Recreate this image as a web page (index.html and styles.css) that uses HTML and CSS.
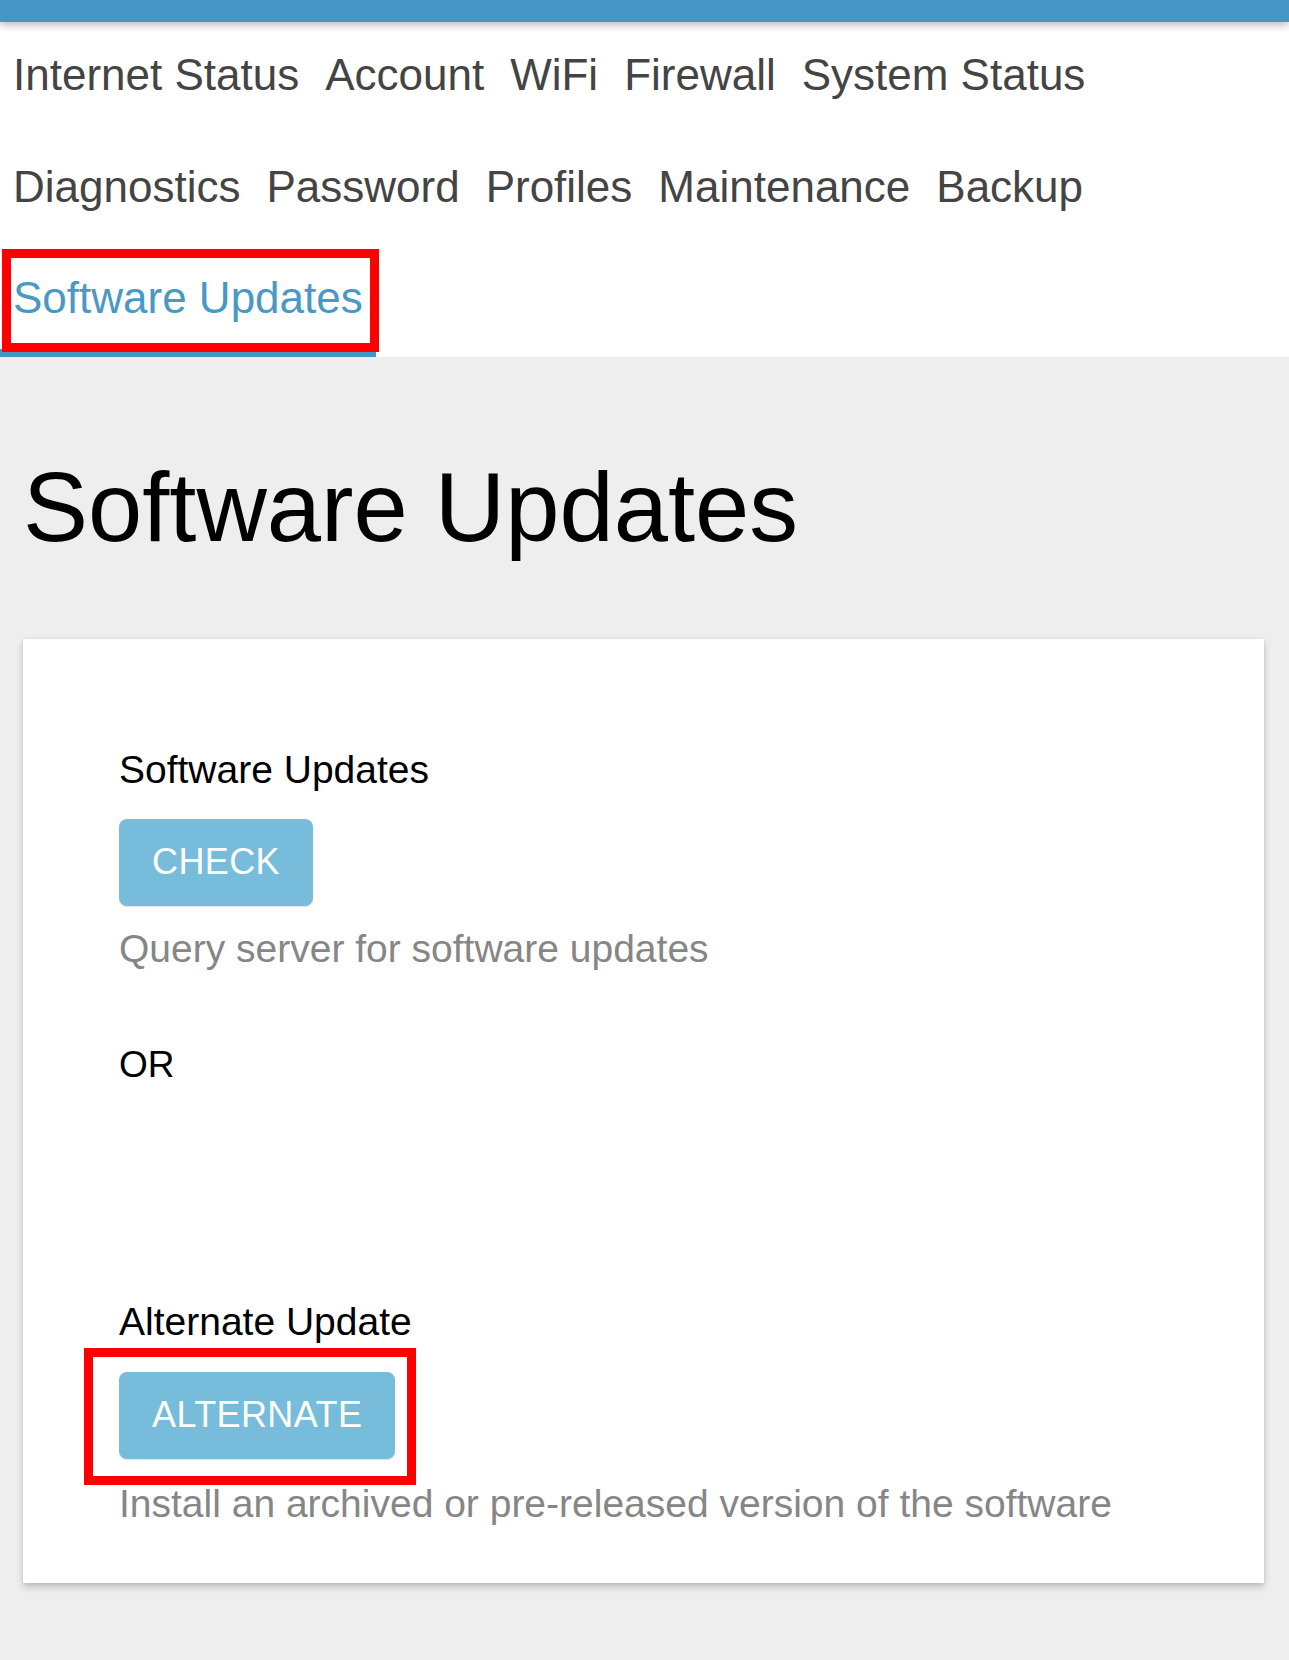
FILE: index.html
```html
<!DOCTYPE html>
<html lang="en">
<head>
<meta charset="utf-8">
<title>Software Updates</title>
<link rel="stylesheet" href="styles.css">
</head>
<body>
<div class="topbar"></div>
<nav class="tabs">
  <a class="tab" href="#">Internet Status</a>
  <a class="tab" href="#">Account</a>
  <a class="tab" href="#">WiFi</a>
  <a class="tab" href="#">Firewall</a>
  <a class="tab" href="#">System Status</a>
  <a class="tab" href="#">Diagnostics</a>
  <a class="tab" href="#">Password</a>
  <a class="tab" href="#">Profiles</a>
  <a class="tab" href="#">Maintenance</a>
  <a class="tab" href="#">Backup</a>
  <a class="tab active" href="#">Software Updates<span class="mark mark-tab"></span></a>
</nav>
<main class="page">
  <h1 class="title">Software Updates</h1>
  <section class="card">
    <div class="label">Software Updates</div>
    <div class="btn-wrap first"><button class="btn" type="button">CHECK</button></div>
    <div class="hint">Query server for software updates</div>
    <div class="or">OR</div>
    <div class="label alt">Alternate Update</div>
    <div class="btn-wrap second"><button class="btn" type="button">ALTERNATE</button><span class="mark mark-btn"></span></div>
    <div class="hint">Install an archived or pre-released version of the software</div>
  </section>
</main>
</body>
</html>
```

FILE: styles.css
```css
html, body {
  margin: 0;
  padding: 0;
}

body {
  background: #eeeeee;
  font-family: "Liberation Sans", Arial, "Helvetica Neue", Helvetica, sans-serif;
  color: #000;
}

.topbar {
  position: relative;
  z-index: 2;
  height: 22px;
  background: #4596c6;
  box-shadow: 0 3px 8px rgba(0, 0, 0, 0.28);
}

.tabs {
  display: flex;
  flex-wrap: wrap;
  background: #ffffff;
}

.tab {
  position: relative;
  display: block;
  padding: 27px 13px 32.67px;
  font-size: 44px;
  line-height: 52px;
  color: #444444;
  text-decoration: none;
  white-space: nowrap;
}

.tab.active {
  color: #4a98c4;
  border-bottom: 8px solid #4596c6;
  padding-bottom: 24.67px;
}

.mark {
  position: absolute;
  box-sizing: border-box;
  border: 9px solid #ff0000;
  pointer-events: none;
}

.mark-tab {
  top: 4px;
  left: 2px;
  right: -3px;
  bottom: -3px;
}

.page {
  padding: 95.7px 25px 77px 23px;
}

.title {
  margin: 0;
  font-size: 97.5px;
  line-height: 110px;
  font-weight: normal;
  color: #000;
}

.card {
  margin-top: 76.3px;
  background: #ffffff;
  padding: 109px 40px 56px 96px;
  box-shadow: 0 4px 7px rgba(0, 0, 0, 0.2), 0 0 3px rgba(0, 0, 0, 0.08);
}

.label {
  font-size: 39px;
  line-height: 44px;
  color: #000;
}

.label.alt {
  margin-top: 212.8px;
}

.btn-wrap {
  position: relative;
  display: flex;
  width: fit-content;
}

.btn-wrap.first {
  margin-top: 27px;
}

.btn-wrap.second {
  margin-top: 28px;
}

.btn {
  height: 87px;
  padding: 0 33px;
  border: none;
  border-radius: 8px;
  background: #77bcdb;
  color: #ffffff;
  font-family: "Liberation Sans", Arial, sans-serif;
  font-size: 36px;
  letter-spacing: 0.4px;
  box-shadow: 0 1px 1px rgba(0, 0, 0, 0.12);
}

.mark-btn {
  top: -24px;
  left: -35px;
  right: -21px;
  bottom: -26px;
}

.hint {
  margin-top: 20.5px;
  font-size: 39px;
  line-height: 46px;
  color: #868686;
}

.btn-wrap.second + .hint {
  margin-top: 22px;
}

.or {
  margin-top: 70.7px;
  font-size: 37px;
  line-height: 44px;
  color: #000;
}
```
